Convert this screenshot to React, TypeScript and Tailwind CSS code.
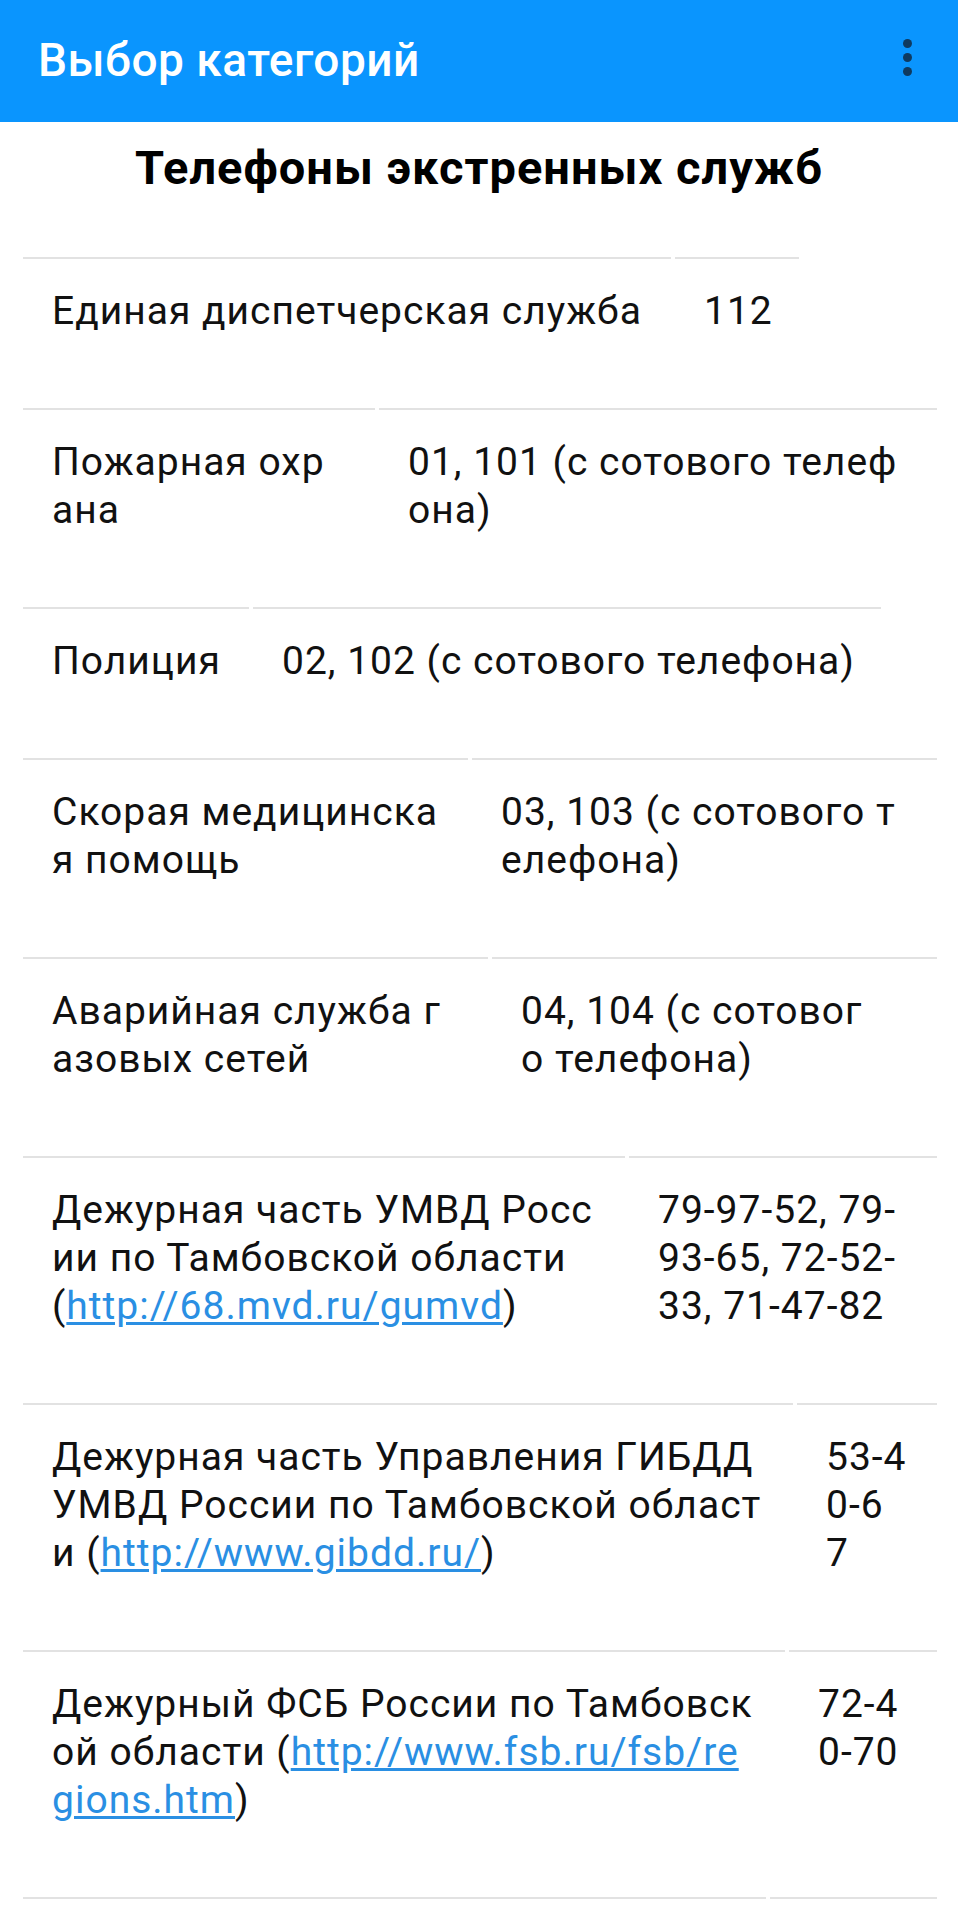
import React from 'react';

type Row = {
  w1: string;
  w2: string;
  name: React.ReactNode;
  phone: React.ReactNode;
};

const Link: React.FC<{ children: React.ReactNode }> = ({ children }) => (
  <a href="#" className="text-[#2a8fe3] underline decoration-[#2a8fe3] underline-offset-[3px]">
    {children}
  </a>
);

const rows: Row[] = [
  {
    w1: 'w-[648px]',
    w2: 'w-[124px]',
    name: 'Единая диспетчерская служба',
    phone: '112',
  },
  {
    w1: 'w-[352px]',
    w2: 'w-[558px]',
    name: <>Пожарная охр<br />ана</>,
    phone: <>01, 101 (с сотового телеф<br />она)</>,
  },
  {
    w1: 'w-[226px]',
    w2: 'w-[628px]',
    name: 'Полиция',
    phone: '02, 102 (с сотового телефона)',
  },
  {
    w1: 'w-[445px]',
    w2: 'w-[465px]',
    name: <>Скорая медицинска<br />я помощь</>,
    phone: <>03, 103 (с сотового т<br />елефона)</>,
  },
  {
    w1: 'w-[465px]',
    w2: 'w-[445px]',
    name: <>Аварийная служба г<br />азовых сетей</>,
    phone: <>04, 104 (с сотовог<br />о телефона)</>,
  },
  {
    w1: 'w-[602px]',
    w2: 'w-[308px]',
    name: (
      <>
        Дежурная часть УМВД Росс<br />
        ии по Тамбовской области<br />
        (<Link>http://68.mvd.ru/gumvd</Link>)
      </>
    ),
    phone: <>79-97-52, 79-<br />93-65, 72-52-<br />33, 71-47-82</>,
  },
  {
    w1: 'w-[770px]',
    w2: 'w-[140px]',
    name: (
      <>
        Дежурная часть Управления ГИБДД<br />
        УМВД России по Тамбовской област<br />
        и (<Link>http://www.gibdd.ru/</Link>)
      </>
    ),
    phone: <>53-4<br />0-6<br />7</>,
  },
  {
    w1: 'w-[762px]',
    w2: 'w-[148px]',
    name: (
      <>
        Дежурный ФСБ России по Тамбовск<br />
        ой области (<Link>http://www.fsb.ru/fsb/re<br />gions.htm</Link>)
      </>
    ),
    phone: <>72-4<br />0-70</>,
  },
  {
    w1: 'w-[743px]',
    w2: 'w-[167px]',
    name: '',
    phone: '',
  },
];

const Cell: React.FC<{ width: string; children: React.ReactNode }> = ({ width, children }) => (
  <div className={`${width} shrink-0 border-t-2 border-[#e2e2e2] px-[29px] pt-[28px] pb-[73px] whitespace-nowrap min-h-[151px]`}>
    {children}
  </div>
);

export default function App() {
  return (
    <div className="min-h-screen bg-white font-['Roboto',sans-serif] text-[#111]">
      <header className="h-[122px] bg-[#0a95fe] flex items-center pb-[2px]">
        <h1 className="pl-[38px] text-[46px] leading-[54px] tracking-[0.5px] font-medium text-white">Выбор категорий</h1>
        <button className="ml-auto mr-[46px] mb-[6px] flex flex-col gap-[5px]">
          <span className="w-[9px] h-[9px] rounded-full bg-[#0f3a60]" />
          <span className="w-[9px] h-[9px] rounded-full bg-[#0f3a60]" />
          <span className="w-[9px] h-[9px] rounded-full bg-[#0f3a60]" />
        </button>
      </header>

      <h2 className="mt-[19px] text-center text-[47px] leading-[54px] tracking-[1px] font-bold text-black">
        Телефоны экстренных служб
      </h2>

      <div className="mt-[62px] ml-[23px] flex flex-col text-[39px] leading-[48px] tracking-[1px]">
        {rows.map((row, i) => (
          <div key={i} className="flex gap-[4px]">
            <Cell width={row.w1}>{row.name}</Cell>
            <Cell width={row.w2}>{row.phone}</Cell>
          </div>
        ))}
      </div>
    </div>
  );
}
